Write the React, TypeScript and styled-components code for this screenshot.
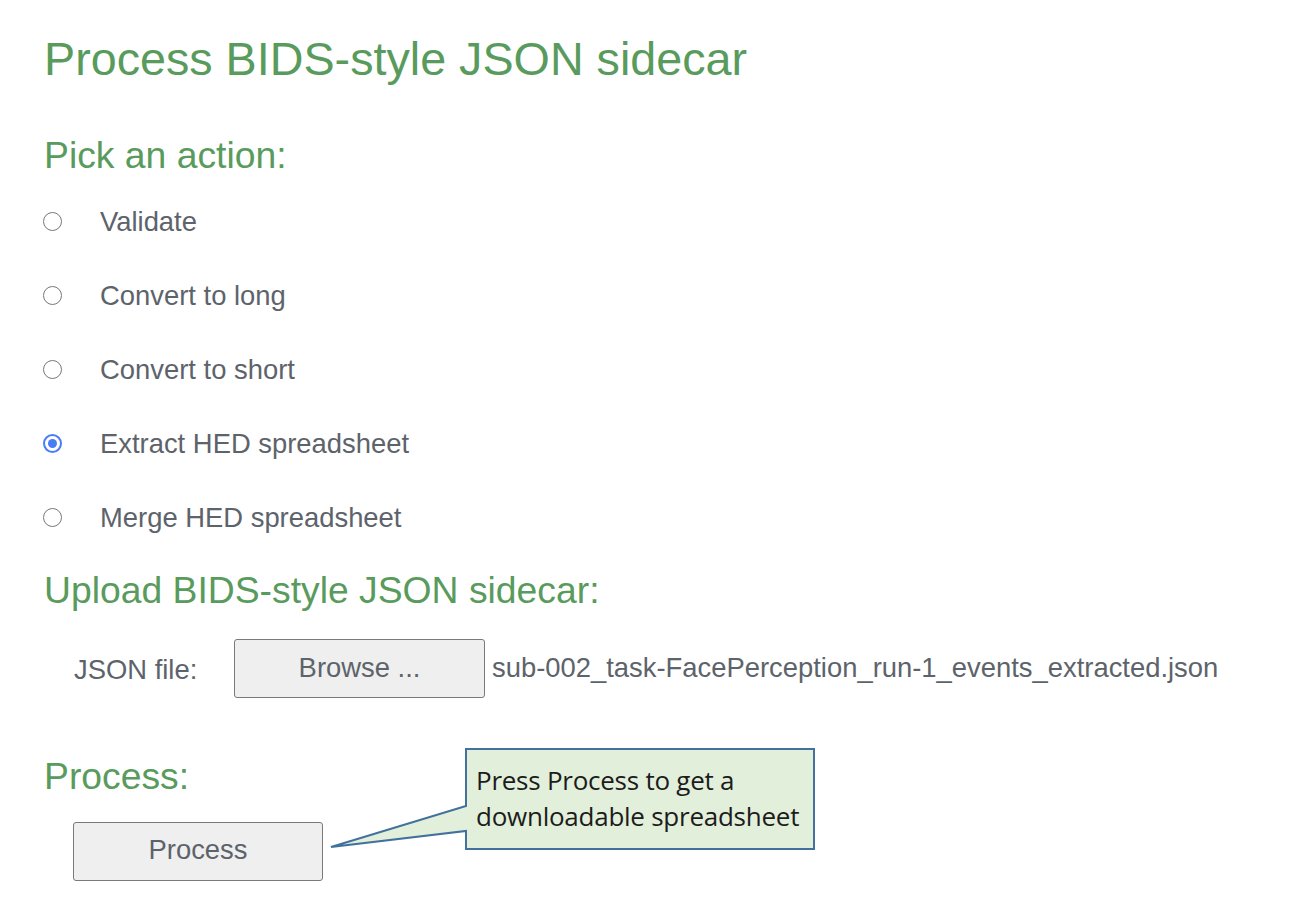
import React, { useState } from "react";
import styled, { createGlobalStyle } from "styled-components";

const GlobalStyle = createGlobalStyle`
  html, body { margin: 0; padding: 0; background: #ffffff; }
  body { font-family: "Liberation Sans", Arial, sans-serif; }
`;

const Page = styled.main`
  padding: 36px 0 36px 44px;
  display: flex;
  flex-direction: column;
  width: 1257px;
  box-sizing: border-box;
  color: #5d636b;
`;

const Title = styled.h1`
  margin: 0;
  font-size: 46.7px;
  line-height: 1;
  font-weight: 400;
  color: #599b5c;
`;

const Heading = styled.h2<{ $top: number }>`
  margin: ${(p) => p.$top}px 0 0 0;
  font-size: 37.3px;
  line-height: 1;
  font-weight: 400;
  color: #599b5c;
`;

const RadioList = styled.div`
  display: flex;
  flex-direction: column;
  gap: 47px;
  margin-top: 34px;
`;

const RadioRow = styled.label`
  display: flex;
  align-items: center;
  height: 27px;
  font-size: 27.4px;
  line-height: 1;
  cursor: pointer;
`;

const RadioCircle = styled.span<{ $checked: boolean }>`
  width: 19px;
  height: 19px;
  box-sizing: border-box;
  border-radius: 50%;
  border: ${(p) => (p.$checked ? "2px solid #4a7bf7" : "1.5px solid #777777")};
  display: flex;
  align-items: center;
  justify-content: center;
  margin: 0 38px 0 -1px;
  flex-shrink: 0;
  &::after {
    content: "";
    width: 9px;
    height: 9px;
    border-radius: 50%;
    background: ${(p) => (p.$checked ? "#4a7bf7" : "transparent")};
  }
`;

const FileRow = styled.div`
  display: flex;
  align-items: center;
  margin-top: 30px;
  margin-left: 30px;
  font-size: 27.4px;
`;

const FileLabel = styled.span`
  width: 160px;
  padding-top: 2px;
`;

const GrayButton = styled.button<{ $width: number }>`
  width: ${(p) => p.$width}px;
  height: 59px;
  box-sizing: border-box;
  background: #efefef;
  border: 1px solid #7a7a7a;
  border-radius: 3px;
  font-family: "Liberation Sans", Arial, sans-serif;
  font-size: 27.4px;
  color: #5d636b;
  padding: 0 0 2px 0;
  cursor: pointer;
`;

const FileName = styled.span`
  margin-left: 7px;
  padding-bottom: 1px;
`;

const ProcessArea = styled.div`
  position: relative;
  margin-top: 26px;
  margin-left: 29px;
`;

const Callout = styled.div`
  position: absolute;
  left: 257px;
  top: -74px;
  width: 490px;
  height: 110px;
`;

const CalloutShape = styled.svg`
  position: absolute;
  left: 0;
  top: 0;
  overflow: visible;
`;

const CalloutText = styled.div`
  position: absolute;
  left: 146px;
  top: 14px;
  width: 345px;
  font-family: "Open Sans", "Noto Sans", sans-serif;
  font-size: 26px;
  line-height: 36px;
  color: #1c1c1c;
  letter-spacing: -0.25px;
  white-space: nowrap;
`;

const actions = [
  "Validate",
  "Convert to long",
  "Convert to short",
  "Extract HED spreadsheet",
  "Merge HED spreadsheet",
];

export default function App() {
  const [selected, setSelected] = useState(3);
  return (
    <>
      <GlobalStyle />
      <Page>
        <Title>Process BIDS-style JSON sidecar</Title>
        <Heading $top={54}>Pick an action:</Heading>
        <RadioList>
          {actions.map((a, i) => (
            <RadioRow key={a} onClick={() => setSelected(i)}>
              <RadioCircle $checked={selected === i} />
              {a}
            </RadioRow>
          ))}
        </RadioList>
        <Heading $top={41}>Upload BIDS-style JSON sidecar:</Heading>
        <FileRow>
          <FileLabel>JSON file:</FileLabel>
          <GrayButton $width={251}>Browse ...</GrayButton>
          <FileName>sub-002_task-FacePerception_run-1_events_extracted.json</FileName>
        </FileRow>
        <Heading $top={60}>Process:</Heading>
        <ProcessArea>
          <GrayButton $width={250}>Process</GrayButton>
          <Callout>
            <CalloutShape width="490" height="110" viewBox="0 0 490 110">
              <path
                d="M 136 1 L 484 1 L 484 101 L 136 101 L 136 83 L 1 99 L 136 58 Z"
                fill="#e2efda"
                stroke="#41719c"
                strokeWidth="2"
                strokeLinejoin="miter"
              />
            </CalloutShape>
            <CalloutText>
              Press Process to get a
              <br />
              downloadable spreadsheet
            </CalloutText>
          </Callout>
        </ProcessArea>
      </Page>
    </>
  );
}
